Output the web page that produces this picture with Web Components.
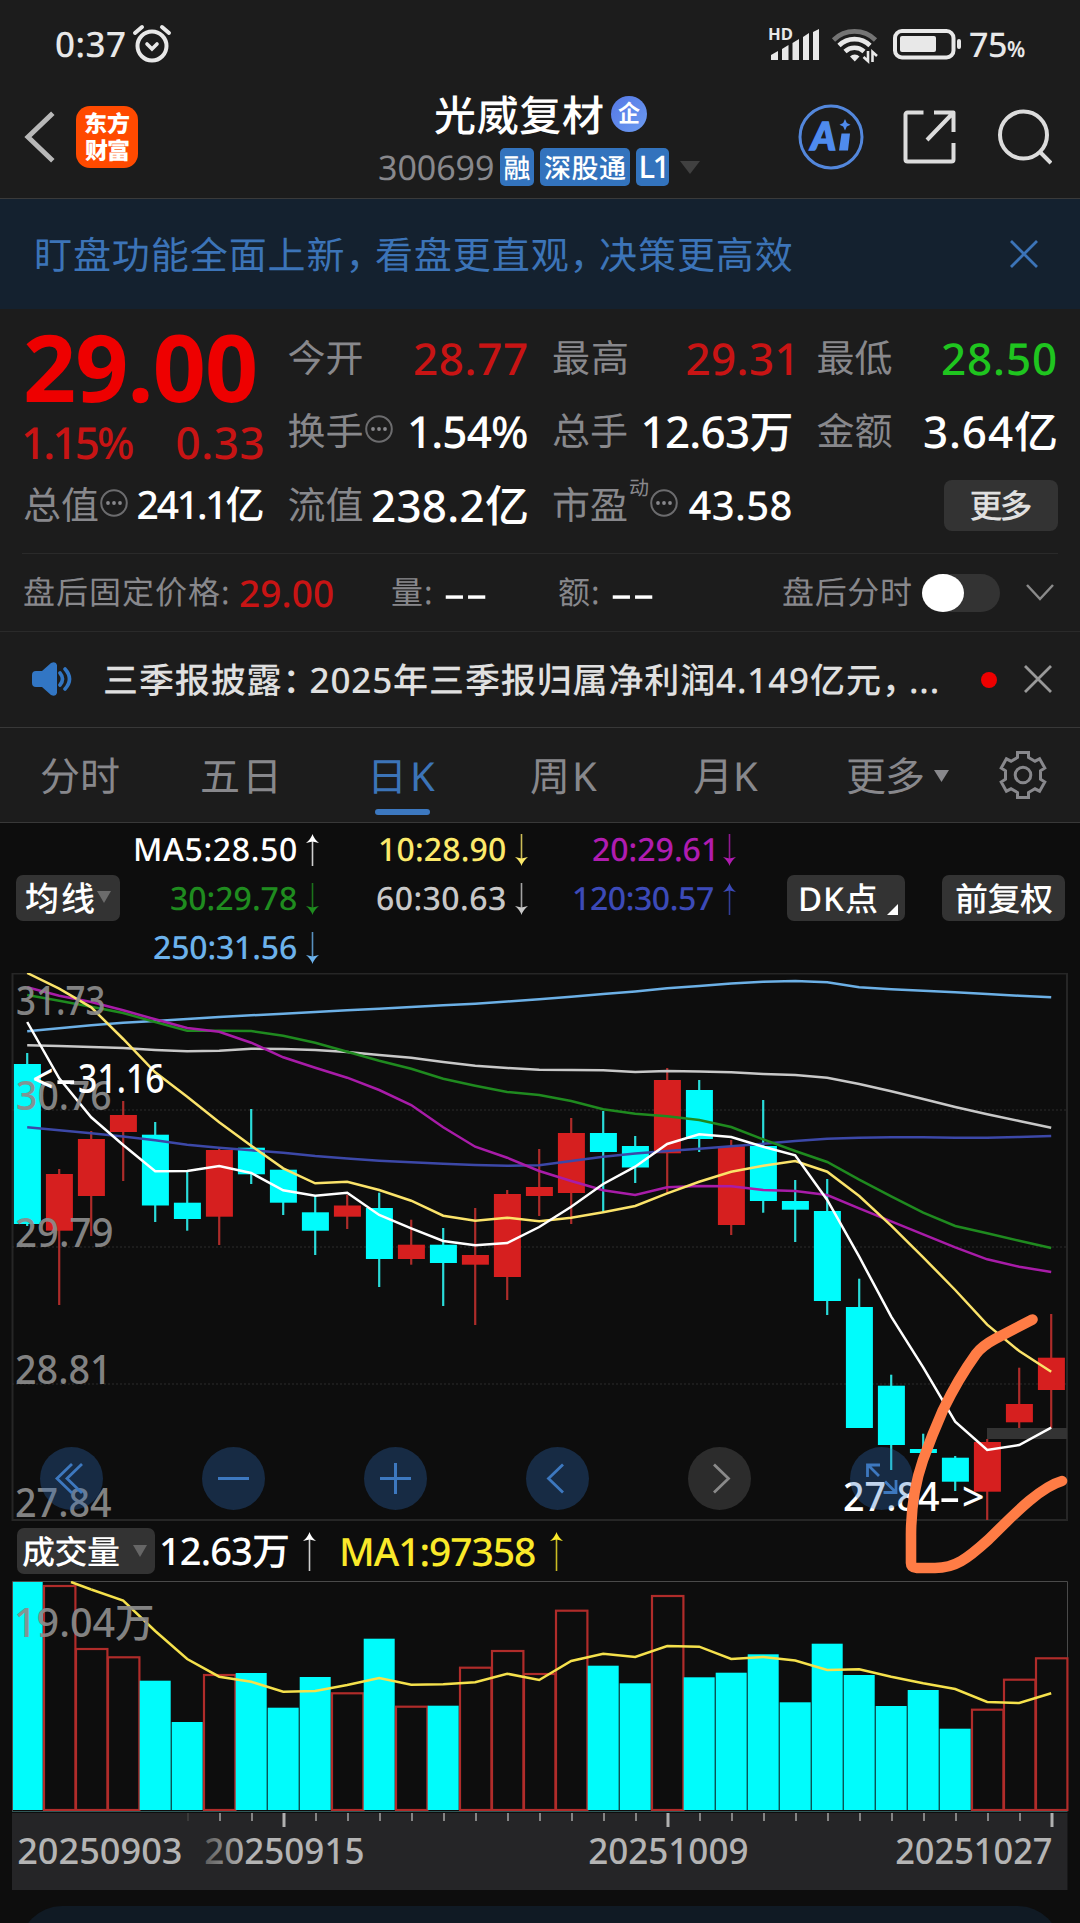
<!DOCTYPE html>
<html lang="zh-CN">
<head>
<meta charset="utf-8">
<title>光威复材 300699</title>
<style>
  html, body { margin: 0; background: #1c1c1c; }
  body {
    width: 1080px;
    height: 1923px;
    overflow: hidden;
    color: #e0e0e0;
    font-family: "Noto Sans", "Noto Sans CJK SC", sans-serif;
    font-weight: 500;
  }
</style>
</head>
<body>
<stock-app></stock-app>
<script>
const NS_FONT = '"Noto Sans", "Noto Sans CJK SC", sans-serif';

function define(name, html, setup) {
  customElements.define(name, class extends HTMLElement {
    constructor() {
      super();
      this.attachShadow({ mode: 'open' });
    }
    connectedCallback() {
      if (this.ready) return;
      this.ready = true;
      this.shadowRoot.innerHTML = typeof html === 'function' ? html(this) : html;
      if (setup) setup(this, this.shadowRoot);
    }
  });
}

// Text whose box is exactly its ink width: w = width, s = font size, b = weight.
// Letter spacing takes up the difference, or a horizontal scale with "stretch".
class FitText extends HTMLElement {
  constructor() {
    super();
    this.attachShadow({ mode: 'open' });
  }

  connectedCallback() {
    const w = Number(this.getAttribute('w'));
    const size = Number(this.getAttribute('s'));
    const weight = this.getAttribute('b') || 500;
    const text = this.getAttribute('t');
    const ctx = FitText.ctx;
    ctx.font = `${weight} ${size}px ${NS_FONT}`;
    const m = ctx.measureText(text);
    this.shadowRoot.innerHTML = `
      <style>
        :host { display: block; flex: none; width: ${w}px; height: ${size}px; line-height: 0; }
        span.t {
          display: inline-block;
          white-space: nowrap;
          font: ${weight} ${size}px/1 ${NS_FONT};
          text-rendering: geometricPrecision;
          vertical-align: top;
          letter-spacing: .01px;
          margin-left: ${m.actualBoundingBoxLeft}px;
          transform-origin: ${-m.actualBoundingBoxLeft}px 50%;
        }
        i { font-style: normal; margin-right: ${-size * 0.25}px; }
      </style><span class="t">${text.replace(/[，：]/g, '<i>$&</i>')}</span>`;
    const span = this.shadowRoot.querySelector('.t');
    const bearings = m.width - m.actualBoundingBoxLeft - m.actualBoundingBoxRight;
    const natural = span.getBoundingClientRect().width - bearings;
    if (this.hasAttribute('stretch')) span.style.transform = `scaleX(${w / natural})`;
    else if (text.length > 1) span.style.letterSpacing = `${(w - natural) / (text.length - 1)}px`;
  }
}
FitText.ctx = document.createElement('canvas').getContext('2d');
customElements.define('fit-text', FitText);

define('status-bar', `
  <style>
    :host { display: flex; align-items: center; height: 88px; padding: 0 55px 0 56px; box-sizing: border-box; color: #e8e8e8; }
    .alarm { margin-left: 7px; }
    .icons { margin-left: auto; overflow: visible; }
    .level { margin-left: 8px; }
    .pct { margin: 9px 0 0 1px; }
    svg { display: block; }
  </style>
  <fit-text t="0:37" w="69" s="35"></fit-text>
  <svg class="alarm" width="40" height="40" viewBox="0 0 40 40" fill="none" stroke="currentColor" stroke-width="4" stroke-linecap="round">
    <circle cx="20" cy="22" r="14.5"/><path d="M3 9l7-6M37 9l-7-6"/><path d="M15 20l5 5 5-5" stroke-width="3.6"/>
  </svg>
  <svg class="icons" width="193" height="40" viewBox="769 24 193 40" fill="currentColor">
    <text x="768" y="40" font-family="Noto Sans" font-weight="700" font-size="16.5" textLength="25" lengthAdjust="spacingAndGlyphs">HD</text>
    <path d="M771 60v-5l7-4v9zM782 60V49l6.500-4v15zM792.500 60V43l6.500-4v21zM803 60V37l6-4v27zM813 60V32l6-3v31z"/>
    <g fill="none" stroke="currentColor" stroke-width="4.6">
      <path d="M833.500 40a30 30 0 0 1 42 0" stroke="#747474"/>
      <path d="M839 45.500a22 22 0 0 1 31 0M845 51.500a14 14 0 0 1 19 0"/>
    </g>
    <path d="M850 56.500a6.500 6.500 0 0 1 9.500 0l-4.700 5z"/>
    <path d="M868 51v10l-4.500-4M872.500 62V52l4.500 4" fill="none" stroke="currentColor" stroke-width="2.600"/>
    <rect x="895" y="31" width="58.500" height="26.500" rx="7" fill="none" stroke="currentColor" stroke-width="4"/>
    <rect x="900" y="36" width="36" height="16" rx="2"/>
    <rect x="957" y="39" width="4" height="10" rx="2"/>
  </svg>
  <fit-text class="level" t="75" w="36" s="34"></fit-text>
  <fit-text class="pct" t="%" w="18" s="22" b="600" stretch></fit-text>
`);

define('tag-label', el => `
  <style>
    :host { display: flex; align-items: center; justify-content: center; height: 38px; border-radius: 5px; background: #3373bd; color: #fff; }
  </style>
  <fit-text t="${el.getAttribute('t')}" w="${el.getAttribute('w')}" s="${el.getAttribute('s') || 27}"></fit-text>
`);

define('nav-bar', `
  <style>
    :host { display: flex; height: 110px; border-bottom: 1px solid #3a3a3a; color: #fff; }
    .left, .right { display: flex; align-items: center; height: 98px; }
    .left { padding-left: 24px; gap: 21px; width: 355px; box-sizing: border-box; }
    .logo {
      width: 62px; height: 62px; border-radius: 14px; background: #ff4a00;
      display: flex; flex-direction: column; align-items: center; justify-content: center; gap: 4px;
    }
    .middle { width: 396px; }
    .title { display: flex; align-items: center; padding-left: 80px; height: 40px; margin-top: 8px; gap: 8px; }
    .badge {
      width: 36px; height: 36px; border-radius: 50%; margin-top: -5px;
      background: linear-gradient(135deg, #5578e6, #6c9bf0);
      display: flex; align-items: center; justify-content: center;
    }
    .codes { display: flex; align-items: center; padding-left: 24px; color: #88888c; margin-top: 12px; }
    .codes tag-label:nth-of-type(1) { margin-left: 7px; width: 34px; }
    .codes tag-label:nth-of-type(2) { margin-left: 6px; width: 90px; }
    .codes tag-label:nth-of-type(3) { margin-left: 6px; width: 33px; }
    .caret { margin: 0 0 0 11px; }
    .right { gap: 40px; padding-left: 47px; }
    svg { display: block; }
  </style>
  <div class="left">
    <svg width="31" height="52" viewBox="0 0 31 52" fill="none" stroke="#b8b8b8" stroke-width="5" stroke-linecap="square"><path d="M27 4L4 26l23 22"/></svg>
    <div class="logo">
      <fit-text t="东方" w="44" s="23" b="900"></fit-text>
      <fit-text t="财富" w="44" s="23" b="900"></fit-text>
    </div>
  </div>
  <div class="middle">
    <div class="title">
      <fit-text t="光威复材" w="168" s="42"></fit-text>
      <span class="badge"><fit-text t="企" w="22" s="24" b="700" stretch></fit-text></span>
    </div>
    <div class="codes">
      <fit-text t="300699" w="114" s="34" b="400"></fit-text>
      <tag-label t="融" w="25" s="27"></tag-label>
      <tag-label t="深股通" w="82" s="27"></tag-label>
      <tag-label t="L1" w="24" s="31"></tag-label>
      <svg class="caret" width="20" height="13"><path d="M0 0h20L10 13z" fill="#404040"/></svg>
    </div>
  </div>
  <div class="right">
    <svg width="66" height="66" viewBox="0 0 66 66">
      <circle cx="33" cy="33" r="31" fill="none" stroke="#5387dc" stroke-width="3"/>
      <text x="13" y="45.500" font-family="Lato" font-weight="900" font-style="italic" font-size="38" fill="#4f8bee" stroke="#4f8bee" stroke-width="1.500" textLength="25" lengthAdjust="spacingAndGlyphs">A</text>
      <path d="M43.500 29.500h8.500l-2 17h-9zM47 15l1.800 4 3.700 1.800-3.700 1.800-1.800 4-1.800-4-3.700-1.800 3.700-1.800z" fill="#4f8bee"/>
    </svg>
    <svg width="53" height="54" viewBox="0 0 53 54" fill="none" stroke="#dcdcdc" stroke-width="4" style="margin-left:-1px">
      <path d="M20.500 2.500H4.500a2 2 0 0 0-2 2v45a2 2 0 0 0 2 2h44a2 2 0 0 0 2-2V33M50.500 22V2.500H31M50 3L24 30" stroke-linejoin="round"/>
    </svg>
    <svg width="56" height="58" viewBox="0 0 56 58" fill="none" stroke="#dcdcdc" stroke-width="4"><circle cx="27.500" cy="27" r="23.500"/><path d="M43 43l12 12"/></svg>
  </div>
`);

define('notice-banner', `
  <style>
    :host { display: flex; align-items: center; justify-content: space-between; height: 110px; padding: 0 42px 0 36px; background: #14212f; color: #3c74b8; box-sizing: border-box; }
    fit-text { margin-top: 2px; }
    svg { margin-top: -1px; }
  </style>
  <fit-text t="盯盘功能全面上新，看盘更直观，决策更高效" w="756" s="38" b="400"></fit-text>
  <svg width="28" height="28" fill="none" stroke="currentColor" stroke-width="2.800"><path d="M1 1l26 26M27 1L1 27"/></svg>
`);

define('info-dot', `
  <style>:host { display: block; flex: none; width: 28px; height: 28px; } svg { display: block; }</style>
  <svg width="28" height="28" viewBox="0 0 28 28"><circle cx="14" cy="14" r="12.800" fill="none" stroke="#6c6c6e" stroke-width="2"/><g fill="#88888c"><circle cx="8" cy="14" r="1.900"/><circle cx="14" cy="14" r="1.900"/><circle cx="20" cy="14" r="1.900"/></g></svg>
`);

define('quote-cell', el => `
  <style>
    :host { display: flex; align-items: center; height: 73px; color: #88888c; }
    .value { margin-left: auto; color: ${{ up: '#c81414', down: '#1fc51f' }[el.getAttribute('tone')] || '#fff'}; }
    ::slotted(info-dot) { margin: -4px 0 0 2px; }
    ::slotted(.sup) { margin: -34px 0 0 3px; }
  </style>
  <fit-text t="${el.getAttribute('label')}" w="74" s="38" b="400"></fit-text>
  <slot></slot>
  <fit-text class="value" t="${el.getAttribute('value')}" w="${el.getAttribute('w')}" s="${el.getAttribute('s') || 44}"></fit-text>
`);

define('quote-panel', `
  <style>
    :host { display: block; height: 243px; padding: 12px 24px 0; box-sizing: border-box; }
    .grid { display: grid; grid-template-columns: repeat(4, 238.5px); column-gap: 26px; grid-auto-rows: 73.7px; }
    .price { grid-row: span 2; color: #ee0000; padding-left: 2px; }
    .change { display: flex; justify-content: space-between; color: #c81414; margin-top: 6px; margin-left: -2px; }
    .more {
      justify-self: end; align-self: center; width: 114px; height: 51px; margin-right: -2px; border-radius: 8px;
      background: #333; color: #e0e0e0; display: flex; align-items: center; justify-content: center;
    }
    .big { margin-top: 0; }
    hr { margin: 11px -2px 0; border: 0; height: 1px; background: #2a2a2a; }
  </style>
  <div class="grid">
    <div class="price">
      <fit-text class="big" t="29.00" w="229" s="93" b="700"></fit-text>
      <div class="change"><fit-text t="1.15%" w="109" s="44"></fit-text><fit-text t="0.33" w="86" s="44"></fit-text></div>
    </div>
    <quote-cell label="今开" value="28.77" w="112" tone="up"></quote-cell>
    <quote-cell label="最高" value="29.31" w="104" tone="up"></quote-cell>
    <quote-cell label="最低" value="28.50" w="113" tone="down"></quote-cell>
    <quote-cell label="换手" value="1.54%" w="117"><info-dot></info-dot></quote-cell>
    <quote-cell label="总手" value="12.63万" w="148"></quote-cell>
    <quote-cell label="金额" value="3.64亿" w="132"></quote-cell>
    <quote-cell label="总值" value="241.1亿" w="125" s="39"><info-dot></info-dot></quote-cell>
    <quote-cell label="流值" value="238.2亿" w="154"></quote-cell>
    <quote-cell label="市盈" value="43.58" w="103" s="40"><fit-text class="sup" t="动" w="18" s="20" b="400"></fit-text><info-dot></info-dot></quote-cell>
    <div class="more"><fit-text t="更多" w="61" s="33"></fit-text></div>
  </div>
  <hr>
`);

define('after-hours', `
  <style>
    :host { display: flex; align-items: center; height: 80px; padding: 2px 26px 0 24px; border-bottom: 1px solid #2a2a2a; box-sizing: border-box; color: #88888c; }
    .red { color: #c81414; margin-left: 12px; }
    .dash { color: #fff; margin-left: 14px; }
    .toggle { width: 78px; height: 38px; border-radius: 19px; background: #333; margin-left: 11px; }
    .toggle::before { content: ""; display: block; width: 42px; height: 38px; border-radius: 50%; background: #fff; }
  </style>
  <fit-text t="盘后固定价格:" w="204" s="32" b="400"></fit-text>
  <fit-text class="red" t="29.00" w="93" s="37"></fit-text>
  <fit-text t="量:" w="39" s="32" b="400" style="margin-left:59px"></fit-text>
  <fit-text class="dash" t="--" w="41" s="37" stretch></fit-text>
  <fit-text t="额:" w="39" s="32" b="400" style="margin-left:73px"></fit-text>
  <fit-text class="dash" t="--" w="41" s="37" stretch></fit-text>
  <fit-text t="盘后分时" w="128" s="32" b="400" style="margin-left:130px"></fit-text>
  <div class="toggle"></div>
  <svg width="28" height="17" fill="none" stroke="#8a8a8a" stroke-width="2.500" style="margin-left:auto"><path d="M1 1l13 14L27 1"/></svg>
`);

define('news-ticker', `
  <style>
    :host { display: flex; align-items: center; height: 96px; padding: 0 28px 0 32px; border-bottom: 1px solid #383838; box-sizing: border-box; }
    .dot { width: 16px; height: 16px; border-radius: 50%; background: #ee0000; margin: 0 27px 0 auto; }
    svg { margin-top: -1px; }
  </style>
  <svg width="42" height="34" viewBox="0 0 42 34">
    <path d="M4 9h6l9-8q5-2 6 2v28q-1 4-6 2l-9-8H4q-4 0-4-4v-8q0-4 4-4z" fill="#3276c4"/>
    <path d="M28 11q5 6 0 12M33 7q9 10 0 20" fill="none" stroke="#3276c4" stroke-width="3.600" stroke-linecap="round"/>
  </svg>
  <fit-text t="三季报披露：2025年三季报归属净利润4.149亿元，..." w="833" s="35" style="margin-left:31px; margin-top: 2px"></fit-text>
  <span class="dot"></span>
  <svg width="28" height="28" fill="none" stroke="#999" stroke-width="2.800"><path d="M1 1l26 26M27 1L1 27"/></svg>
`);

define('period-tab', el => `
  <style>
    :host { display: flex; flex-direction: column; align-items: flex-start; height: 94px; padding-top: 28px; box-sizing: border-box; }
    :host([active]) { color: #3c74b8; }
    :host([active])::after { content: ""; width: 55px; height: 6px; border-radius: 3px; background: #3c78c0; margin: 13px 0 0 1px; }
  </style>
  <fit-text t="${el.getAttribute('t')}" w="${el.getAttribute('w')}" s="40" b="400"></fit-text>
`);

define('period-tabs', `
  <style>
    :host { display: flex; height: 95px; padding-left: 41px; border-bottom: 1px solid #383838; box-sizing: border-box; color: #88888c; }
    period-tab + period-tab { margin-left: var(--gap); }
    svg { display: block; }
  </style>
  <period-tab t="分时" w="78"></period-tab>
  <period-tab t="五日" w="74" style="--gap:83px"></period-tab>
  <period-tab t="日K" w="61" active style="--gap:98px"></period-tab>
  <period-tab t="周K" w="66" style="--gap:96px"></period-tab>
  <period-tab t="月K" w="64" style="--gap:97px"></period-tab>
  <period-tab t="更多" w="76" style="--gap:89px"></period-tab>
  <svg width="15" height="12" style="margin:42px 0 0 11px"><path d="M0 0h15L7.500 12z" fill="currentColor"/></svg>
  <svg width="48" height="50" viewBox="0 0 48 50" fill="none" stroke="currentColor" stroke-width="3" style="margin:22px 0 0 50px">
    <path d="M18.500 2.500h11v5l6.500 3.700 4.600-2.400 5.200 9.200-4.300 2.800v8.400l4.300 2.800-5.200 9.200-4.600-2.400-6.500 3.700v5h-11v-5L12 38.800l-4.600 2.400L2.200 32l4.300-2.800v-8.400L2.200 18l5.200-9.200 4.600 2.400 6.500-3.700z"/>
    <circle cx="24" cy="25" r="7.800"/>
  </svg>
`);

// Thin arrow after an indicator: dir is up or down, h is its height.
define('trend-arrow', el => {
  const h = Number(el.getAttribute('h') || 32);
  const flip = el.getAttribute('dir') === 'down' ? ` transform="rotate(180 6.500 ${h / 2})"` : '';
  return `
  <style>:host { display: block; flex: none; width: 13px; } svg { display: block; overflow: visible; }</style>
  <svg width="13" height="${h}"><g${flip} fill="currentColor"><path d="M6.500 0Q8 5 13 9L6.500 7.500 0 9Q5 5 6.500 0z"/><path d="M5.700 5h1.600v${h - 5}H5.700z" opacity=".8"/></g></svg>`;
});

define('chip-button', el => `
  <style>
    :host { display: flex; align-items: center; height: 46px; border-radius: 7px; background: #333; color: #fff; box-sizing: border-box; }
  </style>
  <fit-text t="${el.getAttribute('t')}" w="${el.getAttribute('w')}" s="${el.getAttribute('s') || 33}"></fit-text>
  <slot></slot>
`);

define('ma-item', el => `
  <style>
    :host { display: flex; align-items: center; justify-content: flex-end; gap: 10px; }
  </style>
  <fit-text t="${el.getAttribute('t')}" w="${el.getAttribute('w')}" s="32"></fit-text>
  <trend-arrow dir="${el.getAttribute('dir')}"></trend-arrow>
`);

define('ma-legend', `
  <style>
    :host {
      display: grid; height: 150px; padding: 2px 0 0 16px; box-sizing: border-box;
      grid-template-columns: 104px 199px 209px 208px 169px 162px; grid-template-rows: repeat(3, 49.3px);
    }
    chip-button { justify-self: end; align-self: center; margin-top: -1px; }
    svg { display: block; }
  </style>
  <span></span>
  <ma-item t="MA5:28.50" w="160" dir="up" style="color:#fff"></ma-item>
  <ma-item t="10:28.90" w="125" dir="down" style="color:#fbe96a"></ma-item>
  <ma-item t="20:29.61" w="120" dir="down" style="color:#b01cb0"></ma-item>
  <span></span><span></span>
  <chip-button t="均线" w="68" s="34" style="width:104px;padding-left:10px"><svg width="14" height="12" style="margin:0 0 2px 3px"><path d="M0 0h14L7 12z" fill="#6c6c6c"/></svg></chip-button>
  <ma-item t="30:29.78" w="125" dir="down" style="color:#1f8c1f"></ma-item>
  <ma-item t="60:30.63" w="128" dir="down" style="color:#c8c8c8"></ma-item>
  <ma-item t="120:30.57" w="139" dir="up" style="color:#3c4ab8"></ma-item>
  <chip-button t="DK点" w="76" s="33" style="width:118px;padding-left:14px"><svg width="11" height="11" style="margin:22px 0 0 10px"><path d="M11 0v11H0z" fill="#fff"/></svg></chip-button>
  <chip-button t="前复权" w="96" style="width:123px;padding-left:14px;margin-right:2px"></chip-button>
  <span></span>
  <ma-item t="250:31.56" w="142" dir="down" style="color:#6cb2ec"></ma-item>
`);

const STEP = 32;
const centre = i => 27.2 + STEP * i;
const RED = '#d61f1f';
const CYAN = '#00fcfc';

// [kind, high, body top, body bottom, low]
const candles = [
  ['d', 1053, 1064, 1224, 1226], ['u', 1169, 1174, 1230.7, 1305], ['u', 1131, 1139, 1196, 1236],
  ['u', 1101, 1115, 1132, 1181], ['d', 1122, 1134.7, 1205.5, 1222], ['d', 1171, 1202.7, 1219, 1230.7],
  ['u', 1148, 1150, 1216.7, 1245], ['d', 1109, 1147.7, 1174.3, 1184], ['d', 1169.7, 1169.7, 1202.7, 1215],
  ['d', 1195, 1212.3, 1230.7, 1255], ['u', 1195, 1205.5, 1216.7, 1229], ['d', 1192.7, 1208, 1259, 1287],
  ['u', 1219.7, 1244.7, 1259, 1264.7], ['d', 1228, 1244.7, 1263, 1306], ['u', 1208, 1255, 1264.7, 1325],
  ['u', 1190, 1194, 1277, 1300], ['u', 1149, 1187, 1196, 1216], ['u', 1118, 1133, 1193, 1224],
  ['d', 1111, 1133, 1152, 1212], ['d', 1136, 1146, 1167.5, 1183], ['u', 1068, 1080, 1153.3, 1192.7],
  ['d', 1080, 1090, 1139, 1152], ['u', 1140, 1146.3, 1225, 1235], ['d', 1100, 1146, 1201, 1212.7],
  ['d', 1180, 1201, 1209.7, 1242], ['d', 1179, 1211, 1301, 1315], ['d', 1278.7, 1307, 1428, 1428],
  ['d', 1374.7, 1385.7, 1445, 1470], ['d', 1433.7, 1449, 1453, 1453], ['d', 1456, 1457.7, 1481.7, 1491],
  ['u', 1439, 1442, 1491.7, 1520], ['u', 1367.7, 1404, 1422.3, 1428], ['u', 1314, 1357.7, 1390, 1428]
];

const averages = {
  '#6cb0e6': [1031.3, 1028.3, 1025.3, 1022.7, 1021, 1019, 1017, 1015.3, 1013.7, 1012, 1010.3, 1008.7, 1007, 1005.3, 1003.7, 1001.5, 999.3, 996.7, 994, 991.5, 988.3, 986, 983.5, 981.7, 981, 982.3, 987.3, 989.2, 990.7, 992.3, 994, 995.7, 997.3],
  '#c8c8c8': [1045.3, 1046, 1047, 1048, 1050, 1051.3, 1050.7, 1048.7, 1049, 1050, 1052, 1055, 1057.7, 1062, 1065.7, 1068, 1069.7, 1070, 1070.2, 1072, 1071, 1071.5, 1072.3, 1074, 1075, 1077.7, 1084, 1091.3, 1099, 1107, 1114.3, 1121, 1127.7],
  '#3c48a8': [1127.3, 1130.3, 1133.3, 1136.5, 1140.3, 1144.7, 1147.7, 1150.3, 1152.7, 1156, 1158.5, 1160.7, 1162.3, 1163.7, 1165, 1165.7, 1165.3, 1161, 1156.7, 1153.5, 1151, 1148.7, 1146.3, 1143.7, 1141, 1138.7, 1137.7, 1137.3, 1137.3, 1137.7, 1137.7, 1137, 1136],
  '#1f8a1f': [995, 1000.7, 1006.7, 1013, 1022, 1030.7, 1030.7, 1031, 1035.7, 1042.7, 1051.7, 1060.7, 1068.7, 1078.7, 1085.7, 1092, 1095, 1101, 1109.3, 1113.7, 1116.3, 1120, 1127, 1139.3, 1151, 1162, 1179.7, 1196.3, 1212.7, 1226, 1233.3, 1240.7, 1248],
  '#a81ca8': [987.3, 995.7, 1002, 1010.3, 1019.3, 1028, 1031.7, 1042.7, 1057.3, 1067.7, 1077.7, 1090, 1105, 1127.3, 1146.7, 1157.7, 1171, 1181, 1190.3, 1195, 1187.3, 1186, 1186.3, 1190, 1191, 1195, 1208.3, 1221.3, 1234.3, 1247.3, 1259.3, 1266.7, 1272],
  '#fbe36a': [973, 988.7, 1007.3, 1039, 1072.3, 1096.7, 1122.3, 1145.7, 1168.3, 1183.3, 1181.7, 1190, 1200.7, 1215.7, 1220.7, 1217.7, 1221.3, 1217.7, 1212.3, 1206, 1193.3, 1181.7, 1171.7, 1165.7, 1161, 1171.7, 1196, 1225.7, 1257.3, 1290, 1324.7, 1351, 1371.7],
  '#ffffff': [1022, 1078.3, 1117.3, 1145, 1171.3, 1171, 1166, 1173, 1190.3, 1195.7, 1192.7, 1215, 1228.3, 1241, 1245.3, 1243, 1227, 1206.7, 1184, 1166.7, 1144, 1134.3, 1137, 1146.7, 1155.3, 1200, 1256.7, 1316.7, 1367.3, 1421.7, 1450, 1445, 1427.7]
};

function polyline(values, colour, from = 0) {
  const pts = values.map((y, i) => `${centre(i + from)},${y}`).join(' ');
  return `<polyline points="${pts}" fill="none" stroke="${colour}" stroke-width="2.5"/>`;
}

function label(text, x, y, w, size, fill, weight = 500) {
  return `<text x="${x - size * 0.05}" y="${y}" font-size="${size}" font-weight="${weight}" fill="${fill}" textLength="${w + size * 0.09}" lengthAdjust="spacingAndGlyphs">${text}</text>`;
}

function drawCandles() {
  return candles.map(([kind, hi, top, bottom, lo], i) => {
    const x = centre(i);
    const fill = kind === 'u' ? RED : CYAN;
    const wick = kind === 'u' ? '#ad2c2a' : '#2adcda';
    return `<path d="M${x} ${hi}V${lo}" stroke="${wick}" stroke-width="2.2"/>` +
      `<rect x="${x - 13.3}" y="${top}" width="27" height="${bottom - top}" fill="${fill}"/>`;
  }).join('');
}

define('round-control', `
  <style>
    :host { display: block; width: 63px; height: 63px; border-radius: 50%; background: rgba(47, 113, 196, .3); color: #3d78bf; }
    :host([off]) { background: rgba(117, 117, 117, .3); color: #8a8a8a; }
  </style>
  <slot></slot>
`);

define('k-chart', () => `
  <style>
    :host { display: block; position: relative; height: 548px; }
    svg { display: block; }
    svg.chart { font-family: ${NS_FONT}; }
    .controls { position: absolute; left: 40px; right: 167px; bottom: 11px; display: flex; justify-content: space-between; }
  </style>
  <svg class="chart" width="1080" height="548" viewBox="0 973 1080 548">
    <rect x="12.500" y="973.500" width="1054.500" height="546.500" fill="none" stroke="#262626" stroke-width="2"/>
    <path d="M12 1110H1067M12 1247H1067M12 1384H1067" stroke="#2c2c2c" stroke-width="1.200" stroke-dasharray="2 2"/>
    <rect x="987" y="1428" width="80" height="11" fill="#333"/>
    ${drawCandles()}
    ${Object.entries(averages).map(([colour, values]) => polyline(values, colour)).join('')}
    <g opacity=".92">
    ${label('31.73', 18, 1015, 86, 39, '#8c8c8c')}
    ${label('30.76', 18, 1110, 92, 39, '#8c8c8c')}
    ${label('29.79', 17, 1247, 95, 39, '#8c8c8c')}
    ${label('28.81', 17, 1384, 93, 39, '#8c8c8c')}
    ${label('27.84', 17, 1517, 93, 39, '#8c8c8c')}
    </g>
    ${label('&lt;', 34, 1093, 18, 39, '#fff')}${label('-', 57, 1093, 18, 39, '#fff')}${label('31.16', 80, 1093, 83, 39, '#fff')}
    ${label('27.84', 845, 1510.5, 93, 39, '#fff')}${label('-', 941, 1510.5, 18, 39, '#fff')}${label('&gt;', 964, 1510.5, 19, 39, '#fff')}
  </svg>
  <div class="controls">
    <round-control><svg width="63" height="63" fill="none" stroke="currentColor" stroke-width="2.800"><path d="M32 17L17 31.500 32 46M42 17L27 31.500 42 46"/></svg></round-control>
    <round-control><svg width="63" height="63" fill="none" stroke="currentColor" stroke-width="3"><path d="M16 31.500h31"/></svg></round-control>
    <round-control><svg width="63" height="63" fill="none" stroke="currentColor" stroke-width="3"><path d="M16 31.500h31M31.500 16v31"/></svg></round-control>
    <round-control><svg width="63" height="63" fill="none" stroke="currentColor" stroke-width="2.800"><path d="M37 17.500L22.500 31.500 37 45.500"/></svg></round-control>
    <round-control off><svg width="63" height="63" fill="none" stroke="currentColor" stroke-width="2.800"><path d="M26 17.500L40.500 31.500 26 45.500"/></svg></round-control>
    <round-control><svg width="63" height="63" fill="none" stroke="currentColor" stroke-width="2.800"><path d="M17.500 30V18H30M18 18l11 11M46 33v12.500H33.500M46 45.500l-11-11"/></svg></round-control>
  </div>
`);

define('volume-head', `
  <style>
    :host { display: flex; align-items: center; height: 60px; padding-left: 17px; color: #fff; }
    svg { display: block; }
  </style>
  <chip-button t="成交量" w="96" s="33" style="width:138px;padding-left:6px"><svg width="14" height="12" style="margin-left:14px"><path d="M0 0h14L7 12z" fill="#666"/></svg></chip-button>
  <fit-text t="12.63万" w="126" s="38" style="margin-left:7px"></fit-text>
  <trend-arrow dir="up" h="39" style="margin-left:15px"></trend-arrow>
  <fit-text t="MA1:97358" w="193" s="39" style="margin-left:26px;color:#fae92a"></fit-text>
  <trend-arrow dir="up" h="39" style="margin-left:15px;color:#fae92a"></trend-arrow>
`);

const volumes = [1582, 1586, 1649, 1657.3, 1680.7, 1722, 1675, 1673, 1707.7, 1677, 1693.3, 1638.7, 1706.7, 1705.7, 1667.7, 1651,
  1674, 1610.7, 1665.7, 1683.3, 1596, 1677.3, 1672.7, 1654.3, 1702.3, 1643.7, 1675, 1706, 1690, 1728.7, 1709.7, 1679.7, 1658.3];
const hollowBars = [1, 2, 3, 6, 10, 12, 14, 15, 16, 17, 20, 30, 31, 32];
const volumeMa = [1589.5, 1600.5, 1631, 1659, 1676.7, 1681.7, 1691.7, 1691, 1685, 1678, 1684.7, 1684.3, 1682.3, 1673.7, 1680, 1661,
  1653.7, 1657, 1646, 1646.7, 1659, 1657, 1660.5, 1670, 1669.3, 1676.7, 1683.3, 1689, 1702, 1703, 1693.3];

function drawVolumes() {
  return volumes.map((y, i) => {
    const x = 11.7 + STEP * i;
    return hollowBars.includes(i)
      ? `<rect x="${x + 0.3}" y="${y}" width="31.4" height="${1810 - y}" fill="none" stroke="#b02c2a" stroke-width="2.2"/>`
      : `<rect x="${i ? x : 13}" y="${y}" width="${i ? 31 : 29.7}" height="${1810 - y}" fill="${CYAN}"/>`;
  }).join('');
}

function drawTicks() {
  let out = '';
  for (let i = 5; i < 33; i++) {
    const major = i === 8 || i === 20 || i === 32;
    const colour = i === 5 ? '#3a3a3a' : major ? '#b0b0b0' : '#858585';
    out += `<path d="M${28 + STEP * i} 1813v${major ? 14 : 8}" stroke="${colour}" stroke-width="${major ? 3 : 2}"/>`;
  }
  return out;
}

define('volume-chart', () => `
  <style>
    :host { display: block; }
    svg { display: block; font-family: ${NS_FONT}; }
  </style>
  <svg width="1080" height="309" viewBox="0 1581 1080 309">
    <defs><linearGradient id="fade" gradientUnits="userSpaceOnUse" x1="200" x2="246" y1="0" y2="0"><stop offset="0" stop-color="#555"/><stop offset="1" stop-color="#b4b4b4"/></linearGradient></defs>
    <path d="M12.500 1811.500V1581.500H1067.500V1811.500" fill="none" stroke="#4a4a4a"/>
    ${drawVolumes()}
    <path d="M12 1811.500H1067" stroke="#305858" stroke-width="1"/>
    ${polyline(volumeMa, '#f5e14c', 2)}
    <path d="M71 1582L91.200 1589.500" stroke="#f5e14c" stroke-width="2.500"/>
    <g opacity=".92">${label('19.04万', 16, 1637, 137, 40, '#8c8c8c')}</g>
    <rect x="12" y="1813" width="1055.500" height="77" fill="#252527"/>
    ${drawTicks()}
    ${label('20250903', 19, 1864, 162, 37, '#b4b4b4')}
    ${label('20250915', 206, 1864, 157, 37, 'url(#fade)')}
    ${label('20251009', 590, 1864, 157, 37, '#b4b4b4')}
    ${label('20251027', 897, 1864, 154, 37, '#b4b4b4')}
  </svg>
`);

define('chart-panel', `
  <style>
    :host { display: block; position: relative; height: 1100px; background: #0d0d0d; overflow: hidden; }
    .mark { position: absolute; left: 0; top: 0; pointer-events: none; }
    .sheet { height: 80px; margin: 16px 20px 0; border-radius: 42px 42px 0 0; background: #101a24; }
  </style>
  <ma-legend></ma-legend>
  <k-chart></k-chart>
  <volume-head></volume-head>
  <volume-chart></volume-chart>
  <div class="sheet"></div>
  <svg class="mark" width="1080" height="1100" viewBox="0 823 1080 1100">
    <path d="M1032.500 1319.500L995 1339Q982 1346 976 1354Q958 1379 943 1410Q932 1435 923 1460C914 1486 911 1510 911 1535V1563Q911 1567.500 917 1568H935C955 1568 967 1559 988 1540C1005 1524 1037 1488 1062 1481" fill="none" stroke="#ff7c45" stroke-width="10.600" stroke-linecap="round" stroke-linejoin="round"/>
  </svg>
`);

define('stock-app', `
  <style>:host { display: flex; flex-direction: column; width: 1080px; } :host > * { flex: none; }</style>
  <status-bar></status-bar>
  <nav-bar></nav-bar>
  <notice-banner></notice-banner>
  <quote-panel></quote-panel>
  <after-hours></after-hours>
  <news-ticker></news-ticker>
  <period-tabs></period-tabs>
  <chart-panel></chart-panel>
`);
</script>
</body>
</html>
